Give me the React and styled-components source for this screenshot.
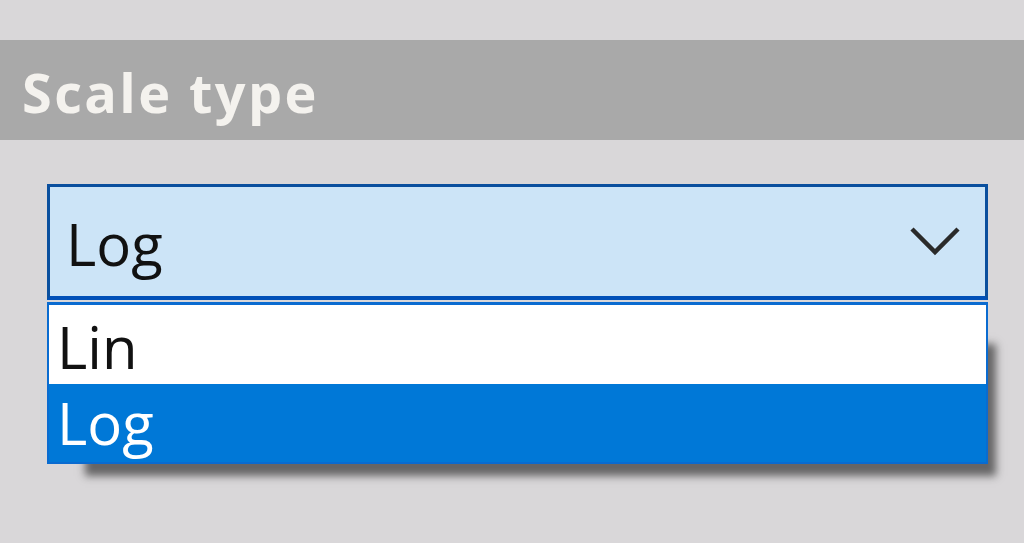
import React from "react";
import styled, { createGlobalStyle } from "styled-components";

const Global = createGlobalStyle`
  html, body { margin: 0; padding: 0; }
  body {
    background: #d9d7d9;
    font-family: "Open Sans", "Noto Sans", "DejaVu Sans", sans-serif;
    width: 1024px;
    height: 543px;
    overflow: hidden;
  }
`;

const Page = styled.div`
  display: flex;
  flex-direction: column;
  padding-top: 40px;
`;

const SectionHeader = styled.div`
  height: 100px;
  background: #a9a9a9;
  display: flex;
  align-items: center;
  padding-left: 22px;
  padding-top: 4px;
  font-weight: 700;
  font-size: 54px;
  color: #f4f2ee;
  letter-spacing: 2.4px;
  box-sizing: border-box;
`;

const ComboArea = styled.div`
  position: relative;
  margin: 44px 0 0 47px;
  width: 941px;
`;

const ComboBox = styled.div`
  box-sizing: border-box;
  height: 116px;
  background: #cce4f7;
  border: 3px solid #0a4f9e;
  border-bottom-width: 4px;
  border-bottom-color: #0050b8;
  display: flex;
  align-items: center;
  justify-content: space-between;
  padding: 0 24px 0 16px;
`;

const ComboText = styled.span`
  font-size: 58px;
  color: #111;
  line-height: 1;
  margin-top: 4px;
`;

const List = styled.div`
  position: absolute;
  left: 0;
  right: 0;
  top: 118px;
  box-sizing: border-box;
  border: 2px solid #0a6bd0;
  border-top-width: 3px;
  background: #fff;
  box-shadow: 23px 27px 8px -15px rgba(40, 40, 40, 0.65);
  display: flex;
  flex-direction: column;
`;

const Option = styled.div`
  height: 78px;
  display: flex;
  align-items: center;
  padding-left: 8px;
  font-size: 58px;
  line-height: 1;
  background: ${(p) => (p.$selected ? "#0078d7" : "#ffffff")};
  color: ${(p) => (p.$selected ? "#ffffff" : "#111")};
  padding-top: ${(p) => (p.$selected ? "0" : "6px")};
  box-sizing: border-box;
  & + & {
    margin-top: 1px;
  }
`;

const Chevron = () => (
  <svg width="52" height="36" viewBox="0 0 52 36" style={{ marginTop: -2 }}>
    <polyline
      points="3,6 26,29 49,6"
      fill="none"
      stroke="#2a2a2a"
      strokeWidth="4.5"
      strokeLinecap="butt"
      strokeLinejoin="miter"
    />
  </svg>
);

export default function App() {
  return (
    <>
      <Global />
      <Page>
        <SectionHeader>Scale type</SectionHeader>
        <ComboArea>
          <ComboBox>
            <ComboText>Log</ComboText>
            <Chevron />
          </ComboBox>
          <List>
            <Option>Lin</Option>
            <Option $selected>Log</Option>
          </List>
        </ComboArea>
      </Page>
    </>
  );
}
